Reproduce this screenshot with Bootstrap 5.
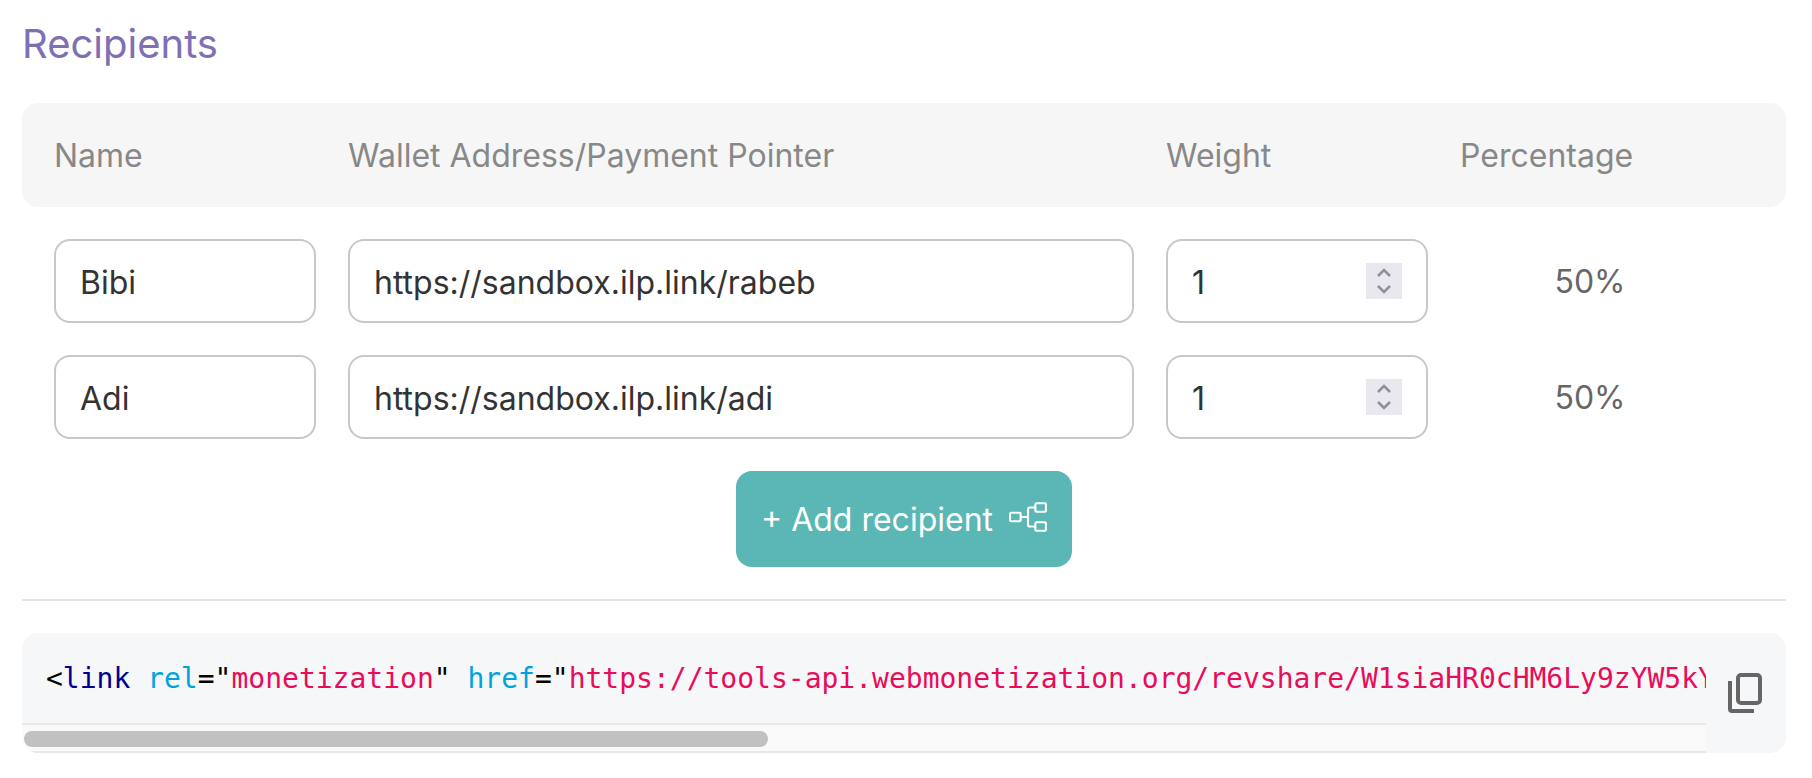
<!DOCTYPE html>
<html lang="en">
<head>
  <meta charset="UTF-8" />
  <meta name="viewport" content="width=device-width, initial-scale=1.0"/>
  <title>Recipients</title>
  <link href="https://cdn.jsdelivr.net/npm/bootstrap@5.3.3/dist/css/bootstrap.min.css" rel="stylesheet">
  <style>
    body {
      font-family: Inter, "Liberation Sans", sans-serif;
      background: #fff;
      overflow: hidden;
    }
    .page-wrap { padding: 15px 26px 0 22px; }
    .title-text {
      color: #7f70b2;
      font-size: 40px;
      line-height: 58px;
      font-weight: 400;
      margin: 0 0 30px;
    }
    .rec-grid {
      display: grid;
      grid-template-columns: 262px 786px 262px 1fr;
      column-gap: 32px;
      align-items: center;
      padding: 0 32px;
    }
    .head-band {
      background: #f6f6f6;
      border-radius: 16px;
      height: 104px;
      color: #888;
      font-size: 32px;
      margin-bottom: 32px;
      padding-top: 2px;
    }
    .row-gap { margin-bottom: 32px; }
    .form-control.rec-input {
      height: 84px;
      border: 2px solid #c8c8c8;
      border-radius: 16px;
      font-size: 32px;
      color: #333;
      padding: 2px 24px 0;
      box-shadow: none;
    }
    .weight-box { position: relative; }
    .stepper {
      position: absolute;
      top: 24px;
      right: 26px;
      width: 36px;
      height: 36px;
      background: #e8e8ee;
    }
    .pct-text {
      color: #666;
      font-size: 32px;
      text-align: center;
      padding: 2px 34px 0 0;
    }
    .btn.add-btn {
      background: #5ab7b5;
      color: #fff;
      border: 0;
      border-radius: 16px;
      height: 96px;
      width: 336px;
      font-size: 32px;
      gap: 16px;
      padding-top: 8px;
    }
    .btn.add-btn svg { margin-top: -6px; }
    .split-line {
      border: 0;
      border-top: 2px solid #e5e5ea;
      opacity: 1;
      margin: 32px 0 32px;
    }
    .code-box {
      background: #f6f7f9;
      border-radius: 16px;
      height: 120px;
      overflow: hidden;
    }
    .code-scroll {
      width: 1684px;
      overflow: hidden;
    }
    .code-line {
      height: 90px;
      line-height: 92px;
      padding-left: 24px;
      margin: 0;
      overflow: hidden;
      white-space: pre;
      font-family: "DejaVu Sans Mono", "Liberation Mono", monospace;
      font-size: 28px;
      color: #000;
    }
    .tk-tag { color: #000090; }
    .tk-attr { color: #00a4db; }
    .tk-val { color: #e90c59; }
    .scroll-track {
      height: 30px;
      background: #fafafa;
      border-top: 2px solid #e8e8e8;
      border-bottom: 2px solid #e8e8e8;
      padding: 6px 2px;
    }
    .scroll-thumb {
      width: 744px;
      height: 16px;
      background: #c1c1c1;
      border-radius: 8px;
    }
    .copy-side { width: 80px; padding: 40px 0 0 22px; }
  </style>
</head>
<body>
  <div class="page-wrap">
    <h2 class="title-text">Recipients</h2>

    <div class="rec-grid head-band">
      <div>Name</div>
      <div>Wallet Address/Payment Pointer</div>
      <div>Weight</div>
      <div>Percentage</div>
    </div>

    <div class="rec-grid row-gap">
      <input type="text" class="form-control rec-input" value="Bibi">
      <input type="text" class="form-control rec-input" value="https://sandbox.ilp.link/rabeb">
      <div class="weight-box">
        <input type="text" class="form-control rec-input" value="1">
        <div class="stepper">
          <svg width="36" height="36" viewBox="0 0 36 36" fill="none" stroke="#8e8e9e" stroke-width="2.5"><path d="M12 13l6-6 6 6M12 23l6 6 6-6"/></svg>
        </div>
      </div>
      <div class="pct-text">50%</div>
    </div>

    <div class="rec-grid row-gap">
      <input type="text" class="form-control rec-input" value="Adi">
      <input type="text" class="form-control rec-input" value="https://sandbox.ilp.link/adi">
      <div class="weight-box">
        <input type="text" class="form-control rec-input" value="1">
        <div class="stepper">
          <svg width="36" height="36" viewBox="0 0 36 36" fill="none" stroke="#8e8e9e" stroke-width="2.5"><path d="M12 13l6-6 6 6M12 23l6 6 6-6"/></svg>
        </div>
      </div>
      <div class="pct-text">50%</div>
    </div>

    <div class="d-flex justify-content-center">
      <button type="button" class="btn add-btn d-inline-flex align-items-center justify-content-center">
        + Add recipient
        <svg width="38" height="30" viewBox="0 0 36 28" fill="none" stroke="#fff" stroke-width="2"><rect x="1" y="10" width="10" height="8" rx="1"/><rect x="25" y="1" width="10" height="8" rx="1"/><rect x="25" y="19" width="10" height="8" rx="1"/><path d="M11 14h7M25 5h-5a2 2 0 0 0-2 2v14a2 2 0 0 0 2 2h5"/></svg>
      </button>
    </div>

    <hr class="split-line">

    <div class="code-box d-flex">
      <div class="code-scroll">
        <pre class="code-line">&lt;<span class="tk-tag">link</span> <span class="tk-attr">rel</span>="<span class="tk-val">monetization</span>" <span class="tk-attr">href</span>="<span class="tk-val">https://tools-api.webmonetization.org/revshare/W1siaHR0cHM6Ly9zYW5kYm94LmlscC5saW5rL3JhYmViIiwxLCJCaWJpIl1d</span>" /&gt;</pre>
        <div class="scroll-track"><div class="scroll-thumb"></div></div>
      </div>
      <div class="copy-side">
        <svg width="34" height="40" viewBox="0 0 34 40" fill="none" stroke="#666" stroke-width="4"><rect x="10" y="2" width="22" height="28" rx="3"/><path d="M2 8v28a2 2 0 0 0 2 2h22"/></svg>
      </div>
    </div>
  </div>
  <script src="https://cdn.jsdelivr.net/npm/bootstrap@5.3.3/dist/js/bootstrap.bundle.min.js"></script>
</body>
</html>
